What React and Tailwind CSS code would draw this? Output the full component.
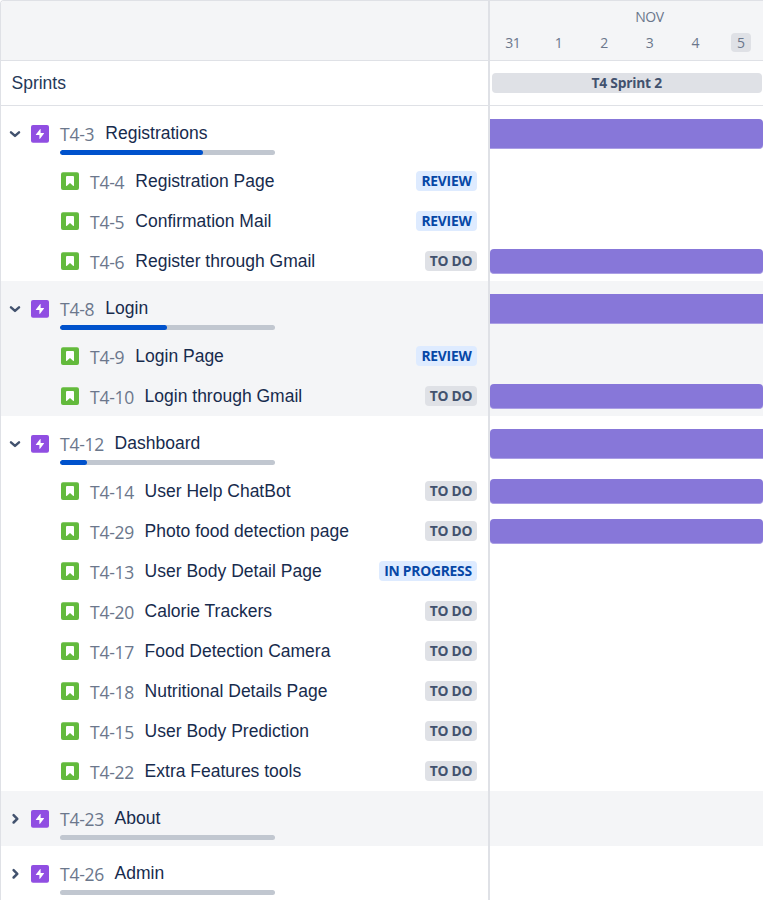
import React from "react";

const todo = "TO DO";
const groups = [
  {
    id: "T4-3", title: "Registrations", open: true, progress: 143, bar: "rounded-r-[4px]",
    items: [
      ["T4-4", "Registration Page", "REVIEW"],
      ["T4-5", "Confirmation Mail", "REVIEW"],
      ["T4-6", "Register through Gmail", todo, true],
    ],
  },
  {
    id: "T4-8", title: "Login", open: true, shaded: true, progress: 107, bar: "rounded-none",
    items: [
      ["T4-9", "Login Page", "REVIEW"],
      ["T4-10", "Login through Gmail", todo, true],
    ],
  },
  {
    id: "T4-12", title: "Dashboard", open: true, progress: 27, bar: "rounded-l-[4px]",
    items: [
      ["T4-14", "User Help ChatBot", todo, true],
      ["T4-29", "Photo food detection page", todo, true],
      ["T4-13", "User Body Detail Page", "IN PROGRESS"],
      ["T4-20", "Calorie Trackers", todo],
      ["T4-17", "Food Detection Camera", todo],
      ["T4-18", "Nutritional Details Page", todo],
      ["T4-15", "User Body Prediction", todo],
      ["T4-22", "Extra Features tools", todo],
    ],
  },
  { id: "T4-23", title: "About", shaded: true, progress: 0, items: [] },
  { id: "T4-26", title: "Admin", progress: 0, items: [] },
];

function Chevron({ open }) {
  return (
    <svg className="block size-4 shrink-0" viewBox="0 0 16 16" fill="none" stroke="#42526e" strokeWidth="2.5" strokeLinecap="round" strokeLinejoin="round">
      <path d={open ? "M5 6.4 9 9.9l4-3.5" : "M7.6 4.1 11.3 7.8l-3.7 3.7"} />
    </svg>
  );
}

function EpicIcon() {
  return (
    <svg className="block size-[18px] shrink-0" viewBox="0 0 18 18">
      <rect width="18" height="17.7" rx="2" fill="#904ee2" />
      <path d="M9.6 4.4v3.5h3.1c.4 0 .5.3.3.6l-4 5.2c-.2.3-.6.2-.6-.1V10H5.2c-.4 0-.5-.3-.3-.6L9 4.2c.2-.3.6-.2.6.2z" fill="#fff" />
    </svg>
  );
}

function StoryIcon() {
  return (
    <svg className="block size-[18px] shrink-0" viewBox="0 0 18 18">
      <rect y="0.3" width="18" height="17.7" rx="2" fill="#63ba3c" />
      <path d="M5 5a1 1 0 0 1 1-1h6a1 1 0 0 1 1 1v8.6c0 .5-.4.6-.7.3L9 10.9l-3.3 3c-.3.3-.7.2-.7-.3z" fill="#fff" />
    </svg>
  );
}

function Label({ id, title }) {
  const short = id.length === 4;
  return (
    <>
      <span className={`${short ? "w-[45.3px]" : "w-[54.6px]"} shrink-0 pt-px font-['Open_Sans',sans-serif] text-[17.5px] leading-5 tracking-[-0.25px] whitespace-nowrap text-[#6b778c]`}>{id}</span>
      <span className="text-[17.5px] leading-5 whitespace-nowrap text-[#172b4d]">{title}</span>
    </>
  );
}

function Status({ text }) {
  const tone = text === todo ? "bg-[#dfe1e6] text-[#42526e]" : "bg-[#deebff] text-[#0747a6]";
  const width = text === todo ? "w-[52px]" : text === "REVIEW" ? "w-[61px]" : "w-[98px]";
  return (
    <span className={`${tone} ${width} ml-auto flex h-5 shrink-0 items-center justify-center rounded-[4px] font-['Open_Sans',sans-serif] text-[13.8px] leading-5 font-bold tracking-[-0.22px] whitespace-nowrap`}>{text}</span>
  );
}

function GroupRows({ group }) {
  return (
    <div className={group.shaded ? "bg-[#f4f5f7]" : "bg-white"}>
      <div className="flex h-[55px] pt-[17px] pl-[5px]">
        <div className="pt-[3px]"><Chevron open={group.open} /></div>
        <div className="mr-[11px] ml-[9px] pt-[2px]"><EpicIcon /></div>
        <div>
          <div className="flex h-[27px]"><Label id={group.id} title={group.title} /></div>
          <div className="h-[5px] w-[215px] overflow-hidden rounded-full bg-[#c1c7d0]">
            <div className="h-full rounded-full bg-[#0052cc]" style={{ width: group.progress }} />
          </div>
        </div>
      </div>
      {group.items.map(([id, title, status]) => (
        <div key={id} className="flex h-10 items-start pt-[10px] pr-[11px] pl-[60px]">
          <div className="mr-[11px] pt-px"><StoryIcon /></div>
          <Label id={id} title={title} />
          <Status text={status} />
        </div>
      ))}
    </div>
  );
}

function GroupTimeline({ group }) {
  return (
    <div className={group.shaded ? "bg-[#f4f5f7]" : "bg-white"}>
      <div className="h-[55px] pt-[13px]">
        {group.bar && <div className={`h-[30px] border-b border-[#ab9fe5] bg-[#8777d9] ${group.bar}`} />}
      </div>
      {group.items.map(([id, , , scheduled]) => (
        <div key={id} className="h-10 pt-2">
          {scheduled && <div className="h-[25px] rounded-[4px] border-b border-[#ab9fe5] bg-[#8777d9]" />}
        </div>
      ))}
    </div>
  );
}

export default function App() {
  return (
    <div className="flex h-[900px] w-[763px] overflow-hidden bg-white font-['Liberation_Sans',Arial,sans-serif]">
      <div className="w-[488px] shrink-0 rounded-tl-[4px] border-t border-l border-[#dfe1e6]">
        <div className="h-[60px] rounded-tl-[3px] border-b border-[#dfe1e6] bg-[#f4f5f7]" />
        <div className="flex h-[45px] items-center border-b border-[#dfe1e6] pl-[10.5px] text-[17.5px] text-[#253858]">Sprints</div>
        {groups.map((g) => <GroupRows key={g.id} group={g} />)}
      </div>
      <div className="w-[2px] shrink-0 bg-[#dfe1e6]" />
      <div className="w-[273px] border-t border-[#dfe1e6] font-['Open_Sans',sans-serif] text-[#6b778c]">
        <div className="h-[60px] overflow-hidden border-b border-[#dfe1e6] bg-[#f4f5f7]">
          <div className="ml-[46px] pt-[6px] text-center text-[14px] leading-5 tracking-[-0.4px]">NOV</div>
          <div className="flex pt-[6px] text-[14px] leading-5 tracking-[-0.5px]">
            {[31, 1, 2, 3, 4, 5].map((d) => (
              <div key={d} className="flex w-[45.6px] shrink-0 justify-center">
                <span className={d === 5 ? "h-[19px] w-5 rounded-[4px] bg-[#dfe1e6] text-center" : ""}>{d}</span>
              </div>
            ))}
          </div>
        </div>
        <div className="h-[45px] border-b border-[#dfe1e6] pt-3 pr-px pl-[1.5px]">
          <div className="h-5 rounded-[4px] bg-[#dfe1e6] text-center text-[13.8px] leading-5 font-bold tracking-[-0.22px] text-[#42526e]">T4 Sprint 2</div>
        </div>
        {groups.map((g) => <GroupTimeline key={g.id} group={g} />)}
      </div>
    </div>
  );
}
